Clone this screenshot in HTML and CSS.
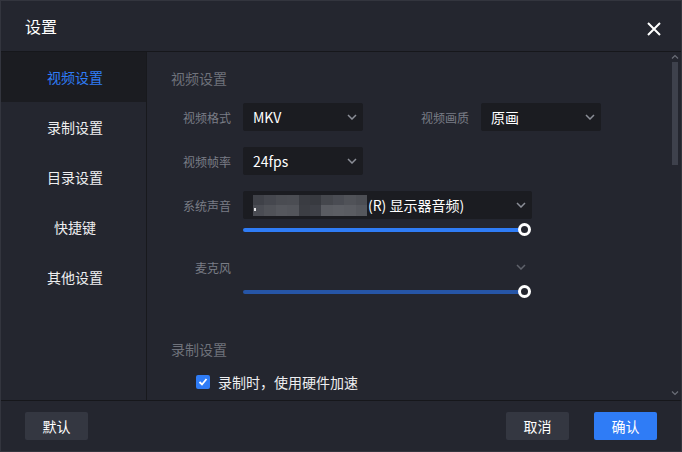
FILE: index.html
```html
<!DOCTYPE html>
<html lang="zh-CN">
<head>
<meta charset="utf-8">
<title>设置</title>
<link rel="stylesheet" href="styles.css">
</head>
<body>
<div class="dialog">
  <header class="header">
    <span class="title">设置</span>
    <svg class="close" width="14" height="14" viewBox="0 0 14 14"><path d="M1 1L13 13M13 1L1 13" stroke="#ffffff" stroke-width="2" fill="none"/></svg>
  </header>
  <div class="main">
    <nav class="sidebar">
      <div class="nav-item active">视频设置</div>
      <div class="nav-item">录制设置</div>
      <div class="nav-item">目录设置</div>
      <div class="nav-item">快捷键</div>
      <div class="nav-item">其他设置</div>
    </nav>
    <section class="content">
      <div class="panel">
        <div class="section-title">视频设置</div>
        <div class="row">
          <label class="label">视频格式</label>
          <div class="select"><span class="value">MKV</span><svg class="chev" width="10" height="6" viewBox="0 0 10 6"><polyline points="1,1 5,5 9,1" fill="none" stroke="#8b8e97" stroke-width="1.5"/></svg></div>
          <label class="label second">视频画质</label>
          <div class="select"><span class="value">原画</span><svg class="chev" width="10" height="6" viewBox="0 0 10 6"><polyline points="1,1 5,5 9,1" fill="none" stroke="#8b8e97" stroke-width="1.5"/></svg></div>
        </div>
        <div class="row">
          <label class="label">视频帧率</label>
          <div class="select"><span class="value">24fps</span><svg class="chev" width="10" height="6" viewBox="0 0 10 6"><polyline points="1,1 5,5 9,1" fill="none" stroke="#8b8e97" stroke-width="1.5"/></svg></div>
        </div>
        <div class="row tight">
          <label class="label">系统声音</label>
          <div class="select wide">
            <span class="value">
              <span class="mosaic">
                <i style="background:#3f4148"></i><i style="background:#45474e"></i><i style="background:#4a4c52"></i><i style="background:#4b4d53"></i><i style="background:#3a3c42"></i><i style="background:#383a40"></i><i style="background:#45474d"></i><i style="background:#4a4c53"></i><i style="background:#505258"></i><i style="background:#4c4e54"></i>
                <i class="dot-cell" style="background:#4a4c53"><b class="dot"></b></i><i style="background:#505258"></i><i style="background:#55575d"></i><i style="background:#53555b"></i><i style="background:#3c3e44"></i><i style="background:#3e4047"></i><i style="background:#5a5c62"></i><i style="background:#5c5e64"></i><i style="background:#5a5c62"></i><i style="background:#55575d"></i>
              </span>(R) 显示器音频)
            </span>
            <svg class="chev" width="10" height="6" viewBox="0 0 10 6"><polyline points="1,1 5,5 9,1" fill="none" stroke="#8b8e97" stroke-width="1.5"/></svg>
          </div>
        </div>
        <div class="slider"><div class="track"><span class="thumb"></span></div></div>
        <div class="row tight mic">
          <label class="label">麦克风</label>
          <div class="select wide empty"><span class="value"></span><svg class="chev" width="10" height="6" viewBox="0 0 10 6"><polyline points="1,1 5,5 9,1" fill="none" stroke="#5f626b" stroke-width="1.5"/></svg></div>
        </div>
        <div class="slider"><div class="track dim"><span class="thumb"></span></div></div>
        <div class="section-title second-title">录制设置</div>
        <div class="check-row">
          <span class="checkbox"><svg width="14" height="14" viewBox="0 0 14 14"><polyline points="3.5,7 6,9.5 10.5,4" fill="none" stroke="#ffffff" stroke-width="1.8"/></svg></span>
          <span class="check-label">录制时，使用硬件加速</span>
        </div>
      </div>
      <div class="scrollbar">
        <svg class="arrow" width="8" height="8" viewBox="0 0 8 8"><polyline points="1,5.5 4,2.5 7,5.5" fill="none" stroke="#6b6e78" stroke-width="1.2"/></svg>
        <div class="thumb-bar"></div>
        <div class="spacer"></div>
        <svg class="arrow" width="8" height="8" viewBox="0 0 8 8"><polyline points="1,2.5 4,5.5 7,2.5" fill="none" stroke="#6b6e78" stroke-width="1.2"/></svg>
      </div>
    </section>
  </div>
  <footer class="footer">
    <button class="btn">默认</button>
    <div class="footer-right">
      <button class="btn">取消</button>
      <button class="btn primary">确认</button>
    </div>
  </footer>
</div>
</body>
</html>
```

FILE: styles.css
```css
* { box-sizing: border-box; }
html, body {
  margin: 0;
  padding: 0;
  background: #24262f;
}
body {
  font-family: "Noto Sans CJK SC", "Noto Sans", sans-serif;
  color: #ffffff;
}
.dialog {
  width: 682px;
  height: 452px;
  border: 1px solid #33353e;
  background: #24262f;
  display: flex;
  flex-direction: column;
  overflow: hidden;
}
.header {
  height: 51px;
  flex: none;
  border-bottom: 1px solid #16171b;
  display: flex;
  align-items: center;
  justify-content: space-between;
  padding: 0 20px 0 24px;
}
.title {
  font-size: 16px;
  line-height: 20px;
  color: #ffffff;
  margin-top: 0;
}
.close {
  display: block;
  margin-top: 6px;
}
.main {
  height: 349px;
  flex: none;
  display: flex;
  border-bottom: 1px solid #16171b;
}
.sidebar {
  width: 146px;
  flex: none;
  border-right: 1px solid #18191d;
  display: flex;
  flex-direction: column;
}
.nav-item {
  height: 50px;
  line-height: 50px;
  text-align: center;
  font-size: 14px;
  color: #eeeef0;
  padding-left: 3px;
}
.nav-item.active {
  background: #1b1c21;
  color: #2f7cf6;
}
.content {
  flex: 1;
  display: flex;
  min-width: 0;
}
.panel {
  flex: 1;
  padding: 16px 0 0 24px;
  overflow: hidden;
}
.section-title {
  font-size: 14px;
  line-height: 20px;
  height: 20px;
  color: #6f727b;
  margin-bottom: 15px;
}
.second-title {
  margin-top: 41px;
  margin-bottom: 13px;
}
.row {
  display: flex;
  align-items: center;
  height: 28px;
  margin-bottom: 16px;
}
.row.tight {
  margin-bottom: 0;
}
.row.mic {
  margin-top: 17px;
}
.label {
  width: 60px;
  flex: none;
  text-align: right;
  font-size: 12px;
  color: #7a7d86;
  margin-right: 12px;
}
.label.second {
  margin-left: 46px;
}
.select {
  width: 120px;
  height: 28px;
  flex: none;
  background: #1b1c21;
  border-radius: 2px;
  display: flex;
  align-items: center;
  justify-content: space-between;
  padding: 0 6px 0 10px;
}
.select.wide {
  width: 289px;
}
.select.empty {
  background: transparent;
}
.value {
  font-size: 14px;
  color: #ffffff;
  line-height: 20px;
  display: flex;
  align-items: center;
  white-space: nowrap;
}
.mosaic {
  display: grid;
  grid-template-columns: repeat(10, 11.4px);
  grid-template-rows: 10px 11px;
  width: 114px;
  margin-right: 1px;
  margin-top: 1px;
}
.mosaic i {
  display: block;
}
.dot-cell {
  position: relative;
}
.dot {
  position: absolute;
  left: 1px;
  top: 3px;
  width: 2px;
  height: 3px;
  background: #e6e6e8;
}
.chev {
  display: block;
  margin-right: 0;
}
.slider {
  margin: 4px 0 0 72px;
  width: 288px;
  height: 13px;
  display: flex;
  align-items: center;
}
.track {
  position: relative;
  width: 281px;
  height: 4px;
  border-radius: 2px;
  background: #2f7cf6;
}
.track.dim {
  background: #2655a6;
}
.thumb {
  position: absolute;
  right: -7px;
  top: -4.5px;
  width: 13px;
  height: 13px;
  border-radius: 50%;
  border: 3px solid #ffffff;
  background: #24262f;
}
.check-row {
  display: flex;
  align-items: center;
  margin-left: 25px;
  height: 20px;
}
.checkbox {
  width: 14px;
  height: 14px;
  background: #2f7cf6;
  border-radius: 2px;
  display: block;
  margin-right: 8px;
}
.checkbox svg {
  display: block;
}
.check-label {
  font-size: 14px;
  color: #eeeef0;
  line-height: 20px;
}
.scrollbar {
  width: 12px;
  flex: none;
  display: flex;
  flex-direction: column;
  align-items: center;
  padding: 1px 0 3px;
}
.arrow {
  display: block;
  flex: none;
}
.thumb-bar {
  width: 6px;
  height: 103px;
  margin-top: 1px;
  background: #3e414c;
}
.spacer {
  flex: 1;
}
.footer {
  flex: 1;
  display: flex;
  justify-content: space-between;
  align-items: flex-start;
  padding: 11px 24px 0 24px;
}
.footer-right {
  display: flex;
  gap: 25px;
}
.btn {
  width: 63px;
  height: 28px;
  border: none;
  border-radius: 2px;
  background: #343741;
  color: #ffffff;
  font-family: "Noto Sans CJK SC", sans-serif;
  font-size: 14px;
  padding: 0;
}
.btn.primary {
  background: #2f7cf6;
}
```
